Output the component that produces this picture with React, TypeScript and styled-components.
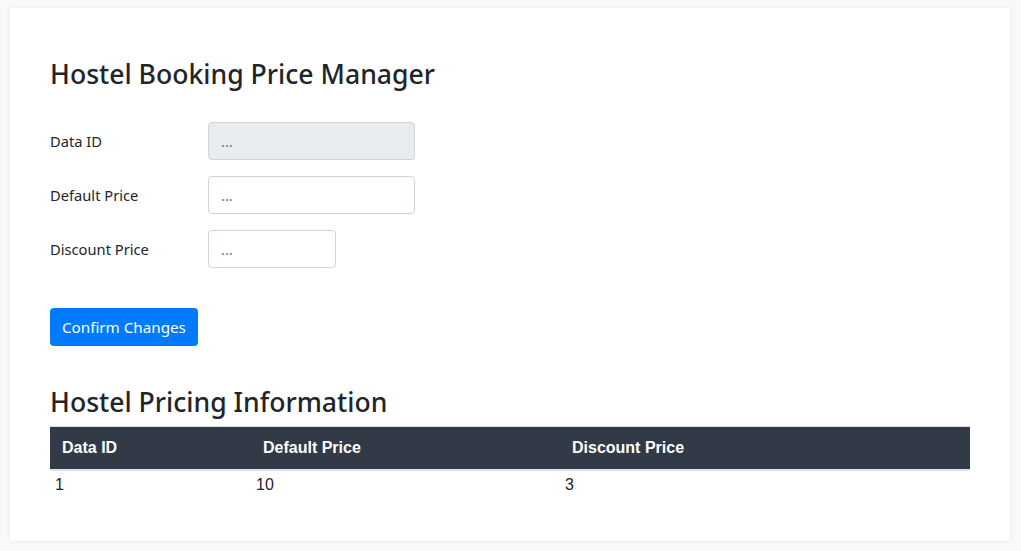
import React from "react";
import styled, { createGlobalStyle } from "styled-components";

const Global = createGlobalStyle`
  html, body { margin: 0; padding: 0; }
  body {
    background: #f9f9f9;
    font-family: "Noto Sans", "Open Sans", sans-serif;
    color: #212529;
  }
`;

const Page = styled.div`
  padding: 8px 11px 10px 10px;
`;

const Card = styled.div`
  background: #fff;
  box-shadow: 0 0 4px rgba(0, 0, 0, 0.08);
  padding: 40px 40px 41px 40px;
`;

const Title = styled.h3`
  margin: 0 0 31px 0;
  font-size: 26.6px;
  font-weight: 500;
  line-height: 1.2;
  padding-top: 11px;
`;

const Form = styled.div`
  display: flex;
  flex-direction: column;
  gap: 16px;
`;

const Row = styled.div`
  display: flex;
  align-items: center;
`;

const Label = styled.label`
  width: 158px;
  font-size: 14.7px;
`;

const Input = styled.input<{ $w: number }>`
  box-sizing: border-box;
  width: ${(p) => p.$w}px;
  height: 38px;
  padding: 6px 12px;
  border: 1px solid #ced4da;
  border-radius: 4px;
  font-family: inherit;
  font-size: 14.5px;
  color: #495057;
  background: #fff;
  &:disabled { background: #e9ecef; }
  &::placeholder { color: #6c757d; }
`;

const Button = styled.button`
  margin-top: 24px;
  align-self: flex-start;
  height: 38px;
  padding: 0 12px;
  background: #007bff;
  color: #fff;
  border: none;
  border-radius: 4px;
  font-family: inherit;
  font-size: 15.2px;
`;

const Subtitle = styled.h3`
  margin: 41px 0 7px 0;
  font-size: 26.6px;
  font-weight: 500;
  line-height: 1.2;
`;

const Table = styled.table`
  width: 100%;
  table-layout: fixed;
  border-collapse: collapse;
  font-family: "Liberation Sans", Arial, sans-serif;
  font-size: 16px;
`;

const Th = styled.th<{ $w: number }>`
  width: ${(p) => p.$w}px;
  text-align: left;
  background: #323a48;
  color: #fff;
  font-weight: 700;
  padding: 12px;
  line-height: 18px;
  border-top: 1px solid #dee2e6;
  border-bottom: 2px solid #dee2e6;
`;

const Td = styled.td`
  padding: 5px 5px 6px 5px;
  line-height: 18px;
  color: #212529;
`;

export default function App() {
  return (
    <>
      <Global />
      <Page>
        <Card>
          <Title>Hostel Booking Price Manager</Title>
          <Form>
            <Row>
              <Label>Data ID</Label>
              <Input $w={207} placeholder="..." disabled />
            </Row>
            <Row>
              <Label>Default Price</Label>
              <Input $w={207} placeholder="..." />
            </Row>
            <Row>
              <Label>Discount Price</Label>
              <Input $w={128} placeholder="..." />
            </Row>
            <Button>Confirm Changes</Button>
          </Form>
          <Subtitle>Hostel Pricing Information</Subtitle>
          <Table>
            <thead>
              <tr>
                <Th $w={177}>Data ID</Th>
                <Th $w={285}>Default Price</Th>
                <Th $w={386}>Discount Price</Th>
              </tr>
            </thead>
            <tbody>
              <tr>
                <Td>1</Td>
                <Td>10</Td>
                <Td>3</Td>
              </tr>
            </tbody>
          </Table>
        </Card>
      </Page>
    </>
  );
}
